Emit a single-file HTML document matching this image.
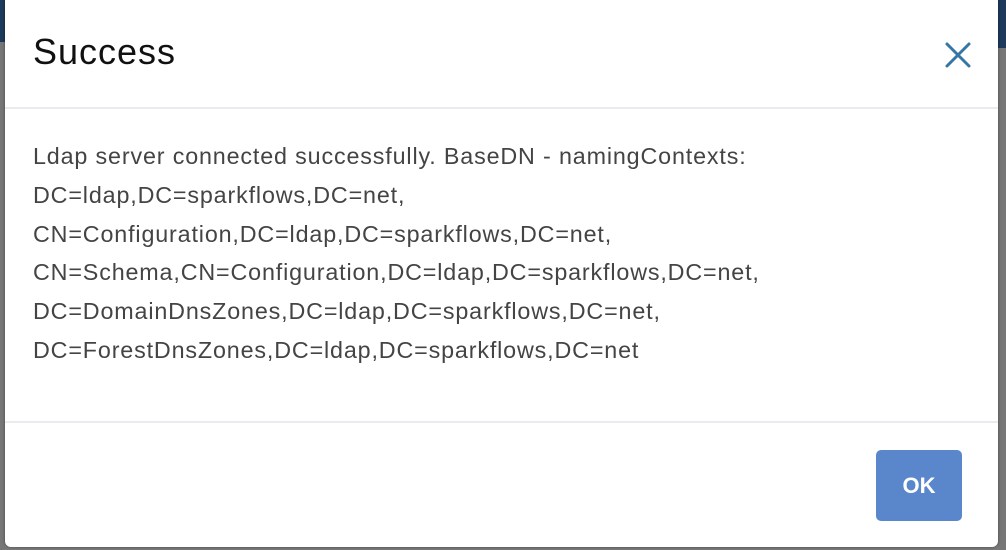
<!DOCTYPE html>
<html><head><style>
html,body{margin:0;width:1006px;height:550px;overflow:hidden;background:#7a7a7a;font-family:"Liberation Sans",sans-serif}
.l{position:absolute;left:0;top:0;width:5px;height:550px;background:#777}
.l:before{content:"";position:absolute;left:0;top:0;width:5px;height:42px;background:#1d3a5c}
.r{position:absolute;right:0;top:0;width:8px;height:550px;background:#777}
.r:before{content:"";position:absolute;left:0;top:0;width:8px;height:48px;background:#1d3a5c}
.m{position:absolute;left:5px;top:-6px;width:993px;height:553px;background:#fff;border-radius:6px;box-shadow:0 0 3px rgba(0,0,0,.4)}
h1{position:absolute;left:28px;top:37px;margin:0;font-weight:normal;font-size:36px;letter-spacing:1px;color:#111}
.x{position:absolute;left:938px;top:46px}
.d1{position:absolute;left:0;right:0;top:113px;height:2px;background:#ebebef}
.d2{position:absolute;left:0;right:0;top:427px;height:2px;background:#ebebef}
.t{position:absolute;left:28px;top:143px;font-size:23.3px;letter-spacing:0.85px;line-height:38.8px;color:#444}
.ok{position:absolute;left:871px;top:456px;width:86px;height:71px;background:#5a86cc;border-radius:5px;color:#fff;font-weight:bold;font-size:22px;text-align:center;line-height:71px}
</style></head><body>
<div class="l"></div><div class="r"></div>
<div class="m">
<h1>Success</h1>
<svg class="x" width="30" height="30" viewBox="0 0 30 30"><path d="M4 4L26 26M26 4L4 26" stroke="#3477a7" stroke-width="3" stroke-linecap="round"/></svg>
<div class="d1"></div>
<div class="t">Ldap server connected successfully. BaseDN - namingContexts:<br>DC=ldap,DC=sparkflows,DC=net,<br>CN=Configuration,DC=ldap,DC=sparkflows,DC=net,<br>CN=Schema,CN=Configuration,DC=ldap,DC=sparkflows,DC=net,<br>DC=DomainDnsZones,DC=ldap,DC=sparkflows,DC=net,<br>DC=ForestDnsZones,DC=ldap,DC=sparkflows,DC=net</div>
<div class="d2"></div>
<div class="ok">OK</div>
</div>
</body></html>
